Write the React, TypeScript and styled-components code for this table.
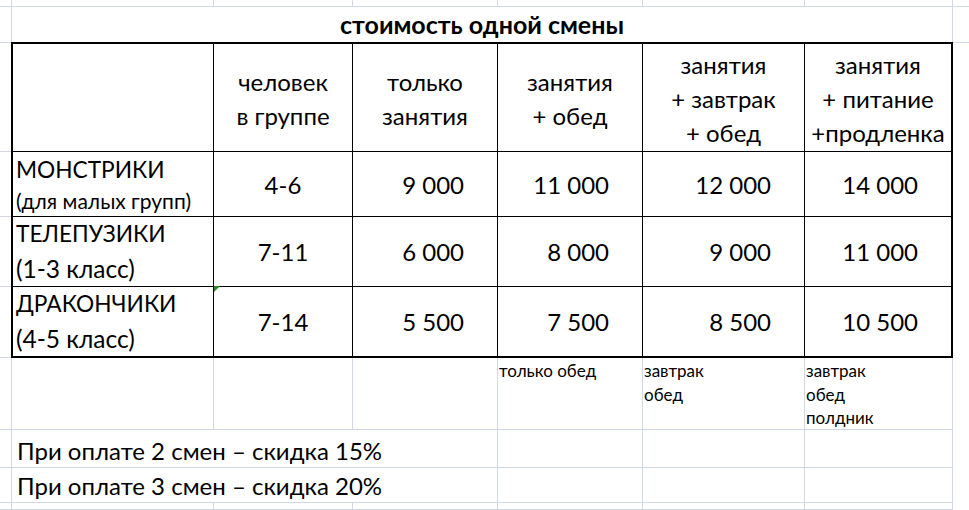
import React from "react";
import styled, { createGlobalStyle } from "styled-components";

const GRID = "#d0d7e5";
const INK = "#000";

const GlobalStyle = createGlobalStyle`
  html, body {
    margin: 0;
    padding: 0;
    background: #fff;
  }
  body {
    font-family: Lato, "Noto Sans", sans-serif;
    color: ${INK};
  }
`;

const Sheet = styled.div`
  display: grid;
  grid-template-columns: 12px 202px 139px 145px 145px 162px 148px 1fr;
  grid-template-rows: 7px 36px 109px 65px 70px 71px 72px 38px 35px 1fr;
  width: 969px;
  height: 510px;
  overflow: hidden;
`;

const GridCell = styled.div<{ $col: number; $row: number; $span?: number }>`
  grid-column: ${(p) => p.$col} / span ${(p) => p.$span ?? 1};
  grid-row: ${(p) => p.$row};
  border-right: 1px solid ${GRID};
  border-bottom: 1px solid ${GRID};
  min-width: 0;
`;

const EdgeCell = styled.div<{ $row: number; $line?: boolean }>`
  grid-column: 8;
  grid-row: ${(p) => p.$row};
  border-bottom: ${(p) => (p.$line ? `1px solid ${GRID}` : "none")};
`;

const Title = styled(GridCell)`
  display: flex;
  align-items: flex-end;
  justify-content: center;
  padding-bottom: 3px;
  font-size: 25px;
  font-weight: 700;
  box-sizing: border-box;
`;

const Note = styled(GridCell)`
  box-sizing: border-box;
  padding: 1px 0 0 1px;
  font-size: 17px;
  line-height: 23.5px;
`;

const Discount = styled(GridCell)`
  display: flex;
  align-items: flex-end;
  box-sizing: border-box;
  padding: 0 0 2px 5px;
  font-size: 24px;
  white-space: nowrap;
`;

/* the bordered price table */
const PriceTable = styled.div`
  grid-column: 2 / span 6;
  grid-row: 3 / span 4;
  margin: -1px 0 0 -1px;
  position: relative;
  display: grid;
  grid-template-columns: 201px 139px 145px 145px 162px 146px;
  grid-template-rows: 108px 65px 70px 69px;
  border: 2px solid ${INK};
  background: #fff;
  font-size: 24px;
`;

const TableCell = styled.div<{ $last?: boolean; $bottom?: boolean }>`
  border-right: ${(p) => (p.$last ? "none" : `1px solid ${INK}`)};
  border-bottom: ${(p) => (p.$bottom ? "none" : `1px solid ${INK}`)};
  display: flex;
  min-width: 0;
`;

const HeadCell = styled(TableCell)`
  flex-direction: column;
  align-items: center;
  justify-content: center;
  text-align: center;
  line-height: 34px;
  padding-top: 3px;
`;

const GroupCell = styled(TableCell)`
  flex-direction: column;
  justify-content: center;
  padding-left: 3px;
  white-space: nowrap;
`;

const GroupName = styled.span`
  font-size: 22.7px;
  line-height: 34px;
`;

const GroupNote = styled.span<{ $small?: boolean }>`
  font-size: ${(p) => (p.$small ? "21px" : "24.5px")};
  line-height: ${(p) => (p.$small ? "28px" : "35px")};
`;

const CountCell = styled(TableCell)`
  align-items: center;
  justify-content: center;
`;

const PriceCell = styled(TableCell)`
  align-items: center;
  justify-content: flex-end;
  padding-right: 33px;
`;

const ErrorMark = styled.span`
  position: absolute;
  left: 201px;
  top: 242px;
  width: 0;
  height: 0;
  border-top: 6px solid #1e8c1e;
  border-right: 6px solid transparent;
`;

type Group = { name: string; note: string; small?: boolean; count: string; prices: string[] };

const heads: string[][] = [
  [],
  ["человек", "в группе"],
  ["только", "занятия"],
  ["занятия", "+ обед"],
  ["занятия", "+ завтрак", "+ обед"],
  ["занятия", "+ питание", "+продленка"],
];

const groups: Group[] = [
  { name: "МОНСТРИКИ", note: "(для малых групп)", small: true, count: "4-6", prices: ["9 000", "11 000", "12 000", "14 000"] },
  { name: "ТЕЛЕПУЗИКИ", note: "(1-3 класс)", count: "7-11", prices: ["6 000", "8 000", "9 000", "11 000"] },
  { name: "ДРАКОНЧИКИ", note: "(4-5 класс)", count: "7-14", prices: ["5 500", "7 500", "8 500", "10 500"] },
];

const notes: Record<number, string[]> = {
  5: ["только обед"],
  6: ["завтрак", "обед"],
  7: ["завтрак", "обед", "полдник"],
};

const nb = (s: string) => s.replace(/ /g, "\u00a0");

export default function App() {
  return (
    <>
      <GlobalStyle />
      <Sheet>
        {Array.from({ length: 10 }, (_, i) => (
          <GridCell key={`a${i}`} $col={1} $row={i + 1} />
        ))}
        {Array.from({ length: 10 }, (_, i) => (
          <EdgeCell key={`h${i}`} $row={i + 1} $line={i < 2} />
        ))}

        {[2, 3, 4, 5, 6, 7].map((c) => (
          <GridCell key={`top${c}`} $col={c} $row={1} />
        ))}

        <Title $col={2} $row={2} $span={6}>
          стоимость одной смены
        </Title>

        <PriceTable>
          {heads.map((lines, i) => (
            <HeadCell key={`hd${i}`} $last={i === heads.length - 1}>
              {lines.map((l) => (
                <span key={l}>{l}</span>
              ))}
            </HeadCell>
          ))}
          {groups.map((g, r) => {
            const bottom = r === groups.length - 1;
            return (
              <React.Fragment key={g.name}>
                <GroupCell $bottom={bottom}>
                  <GroupName>{g.name}</GroupName>
                  <GroupNote $small={g.small}>{g.note}</GroupNote>
                </GroupCell>
                <CountCell $bottom={bottom}>{g.count}</CountCell>
                {g.prices.map((p, k) => (
                  <PriceCell key={k} $bottom={bottom} $last={k === g.prices.length - 1}>
                    {nb(p)}
                  </PriceCell>
                ))}
              </React.Fragment>
            );
          })}
          <ErrorMark />
        </PriceTable>

        {[2, 3, 4, 5, 6, 7].map((c) => (
          <Note key={`n${c}`} $col={c} $row={7}>
            {(notes[c] ?? []).map((l) => (
              <div key={l}>{l}</div>
            ))}
          </Note>
        ))}

        <Discount $col={2} $row={8} $span={3}>
          При оплате 2 смен – скидка 15%
        </Discount>
        <Discount $col={2} $row={9} $span={3}>
          При оплате 3 смен – скидка 20%
        </Discount>
        {[8, 9, 10].map((r) =>
          [5, 6, 7].map((c) => <GridCell key={`d${r}${c}`} $col={c} $row={r} />)
        )}
        {[2, 3, 4].map((c) => (
          <GridCell key={`e${c}`} $col={c} $row={10} />
        ))}
      </Sheet>
    </>
  );
}
